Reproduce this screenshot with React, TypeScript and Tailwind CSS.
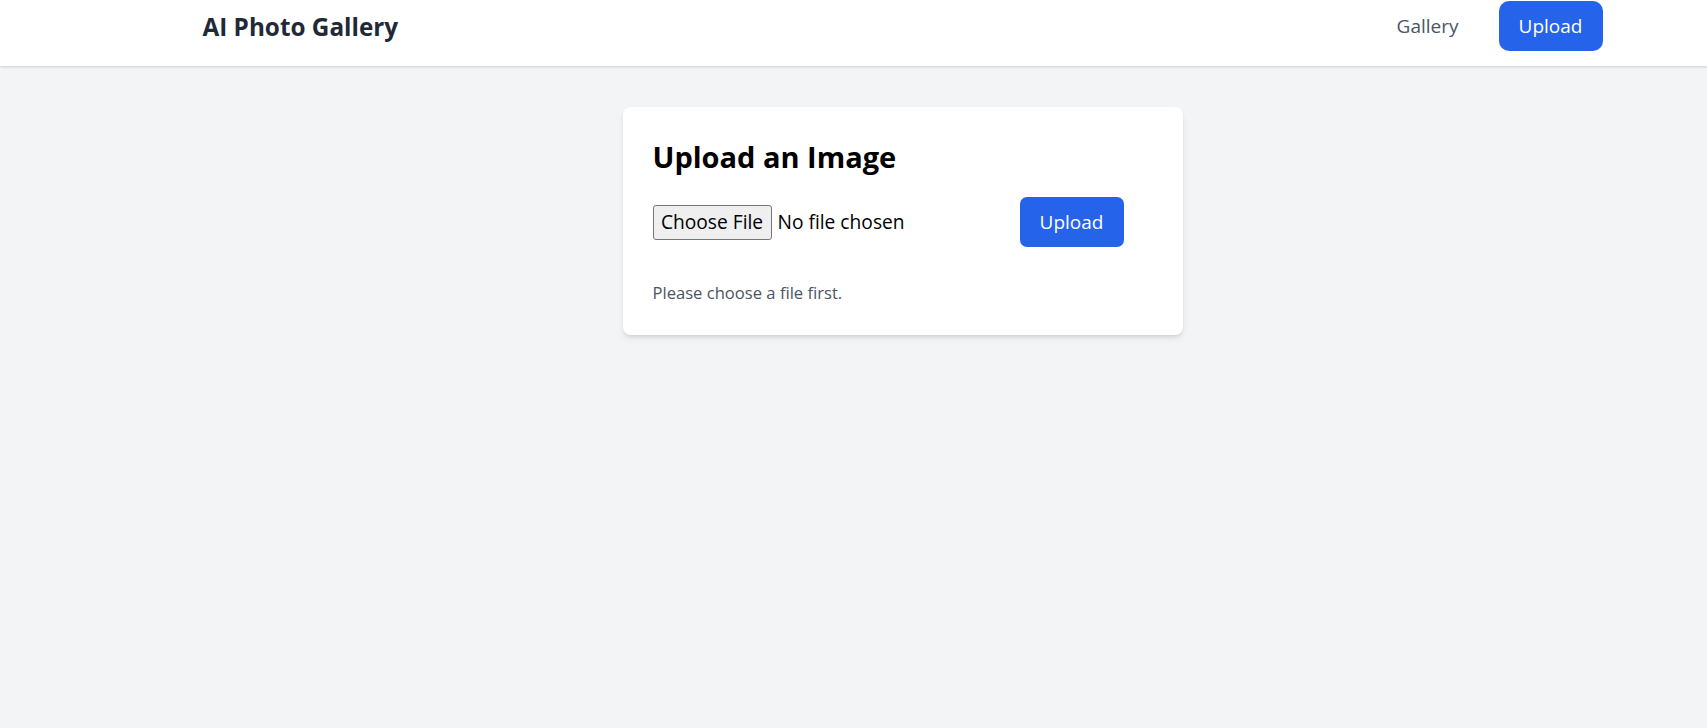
import { useRef, useState } from "react";

// Page was captured at 125% zoom, so every size here is the CSS value x1.25.
export default function App() {
  const inputRef = useRef<HTMLInputElement>(null);
  const [fileName, setFileName] = useState<string | null>(null);
  const [message, setMessage] = useState("Please choose a file first.");

  const onUpload = () => {
    if (!fileName) {
      setMessage("Please choose a file first.");
      return;
    }
    setMessage(`Uploading ${fileName}...`);
  };

  return (
    <div
      className="min-h-screen w-full overflow-hidden bg-[#f3f4f6]"
      style={{ fontFamily: '"Open Sans", "Noto Sans", sans-serif' }}
    >
      <div className="w-[1805px]">
        <header className="h-[66px] bg-white shadow-[0_1px_3px_rgba(0,0,0,0.1),0_1px_2px_rgba(0,0,0,0.06)]">
          <div className="mx-auto flex h-[52px] max-w-[1440px] items-center justify-between px-[20px]">
            <h1 className="text-[24.3px] font-bold leading-[35px] text-[#1f2937]">
              AI Photo Gallery
            </h1>
            <nav className="flex items-center gap-[40px]">
              <a href="#" className="text-[19px] leading-[30px] text-[#4b5563]">
                Gallery
              </a>
              <a
                href="#"
                className="flex h-[50px] w-[104px] items-center justify-center rounded-[10px] bg-[#2563eb] text-[19px] text-white"
              >
                Upload
              </a>
            </nav>
          </div>
        </header>

        <main className="pt-[41px]">
          <div className="mx-auto w-[560px] rounded-[8px] bg-white p-[30px] shadow-[0_4px_6px_-1px_rgba(0,0,0,0.1),0_2px_4px_-2px_rgba(0,0,0,0.1)]">
            <h2 className="mb-[20px] text-[29px] font-bold leading-[40px] text-black">
              Upload an Image
            </h2>
            <div className="flex h-[50px] items-center gap-[20px]">
              <div className="flex w-[347px] items-center">
                <input
                  ref={inputRef}
                  type="file"
                  className="hidden"
                  onChange={(e) => setFileName(e.target.files?.[0]?.name ?? null)}
                />
                <button
                  onClick={() => inputRef.current?.click()}
                  className="flex h-[35px] w-[119px] items-center justify-center rounded-[3px] border border-[#767676] bg-[#efefef] text-[19.2px] text-black"
                >
                  Choose File
                </button>
                <span className="ml-[6px] text-[19.2px] text-black">
                  {fileName ?? "No file chosen"}
                </span>
              </div>
              <button
                onClick={onUpload}
                className="flex h-[50px] w-[104px] items-center justify-center rounded-[7px] bg-[#2563eb] text-[19px] text-white"
              >
                Upload
              </button>
            </div>
            <p className="mt-[33px] text-[16.6px] leading-[25px] text-[#4b5563]">{message}</p>
          </div>
        </main>
      </div>
    </div>
  );
}
